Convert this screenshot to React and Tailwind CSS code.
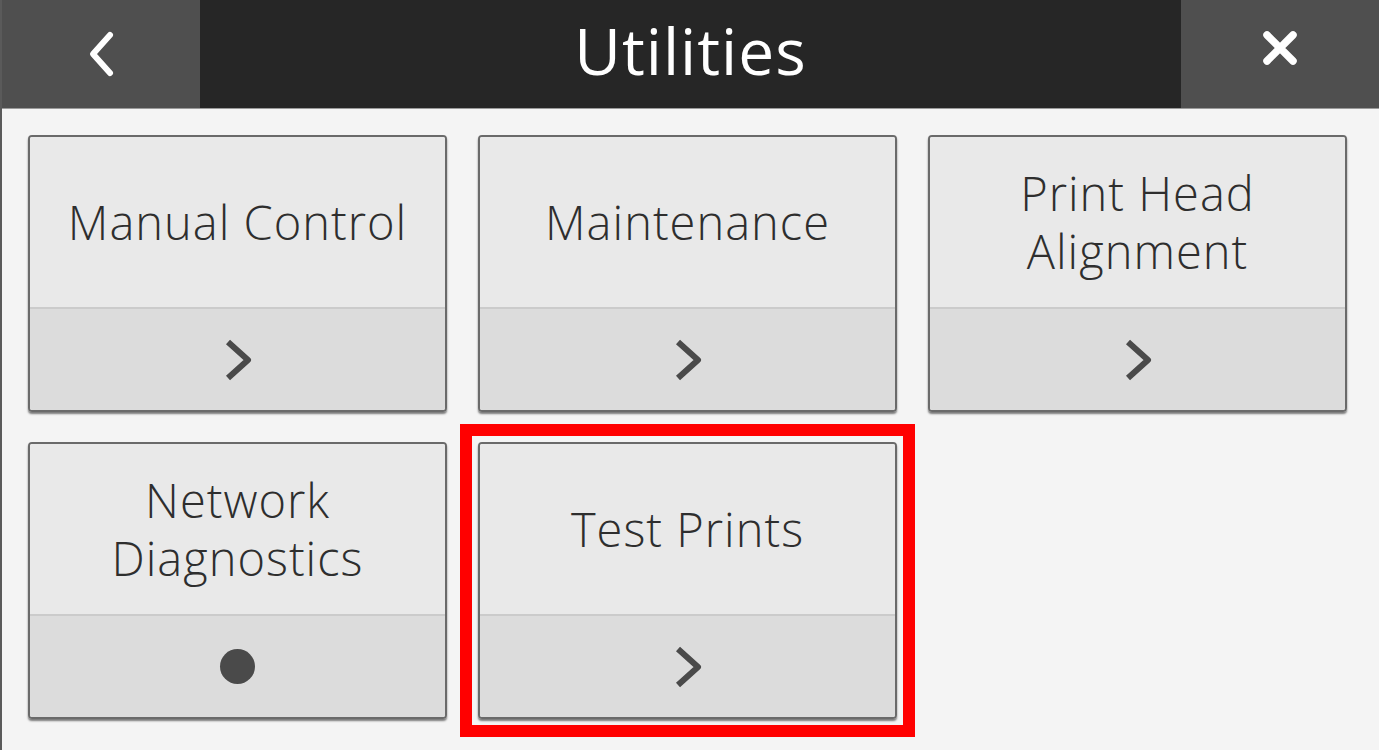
import React from "react";

const font = { fontFamily: '"Open Sans", "DejaVu Sans", sans-serif' };

function Chevron() {
  return (
    <svg width="34" height="46" viewBox="0 0 34 46" fill="none">
      <path d="M7 5 L27 23 L7 41" stroke="#4a4a4a" strokeWidth="6" strokeLinejoin="round" strokeLinecap="butt" />
    </svg>
  );
}

function Dot() {
  return <div className="w-[35px] h-[35px] rounded-full bg-[#4a4a4a]" />;
}

function Card({ lines, icon }) {
  return (
    <div className="w-[419px] h-[277px] flex flex-col rounded-[4px] border-2 border-[#6a6a6a] overflow-hidden shadow-[0_2px_2px_rgba(0,0,0,0.5)]">
      <div className="h-[172px] bg-[#e9e9e9] flex flex-col items-center justify-center text-[47px] leading-[58px] tracking-[1px] font-light text-[#2e2e2e] border-b-2 border-[#cbcbcb]">
        {lines.map((l) => (
          <div key={l}>{l}</div>
        ))}
      </div>
      <div className="flex-1 bg-[#dcdcdc] flex items-center justify-center">
        {icon === "dot" ? <Dot /> : <Chevron />}
      </div>
    </div>
  );
}

export default function App() {
  return (
    <div className="w-[1379px] h-[750px] bg-[#f4f4f4] flex flex-col border-l-2 border-[#5a5a5a] overflow-hidden" style={font}>
      <div className="h-[109px] flex shrink-0 border-b border-[#9a9a9a]">
        <div className="w-[198px] bg-[#4f4f4f] flex items-center justify-center">
          <svg width="40" height="50" viewBox="0 0 40 50" fill="none">
            <path d="M29 6 L12 25 L29 44" stroke="#ffffff" strokeWidth="6" strokeLinecap="round" strokeLinejoin="round" />
          </svg>
        </div>
        <div className="flex-1 bg-[#262626] flex items-center justify-center text-white text-[64px] tracking-[1px] leading-none pb-[6px]">
          Utilities
        </div>
        <div className="w-[198px] bg-[#4f4f4f] flex items-center justify-center pb-[12px]">
          <svg width="40" height="40" viewBox="0 0 40 40" fill="none">
            <path d="M7 7 L33 33 M33 7 L7 33" stroke="#ffffff" strokeWidth="7.5" strokeLinecap="round" />
          </svg>
        </div>
      </div>
      <div className="pt-[26px] pl-[26px] grid grid-cols-[419px_419px_419px] gap-x-[31px] gap-y-[30px]">
        <Card lines={["Manual Control"]} />
        <Card lines={["Maintenance"]} />
        <Card lines={["Print Head", "Alignment"]} />
        <Card lines={["Network", "Diagnostics"]} icon="dot" />
        <div className="relative">
          <Card lines={["Test Prints"]} />
          <div className="absolute -left-[18px] -right-[18px] -top-[18px] -bottom-[18px] border-[12px] border-[#ff0000]" />
        </div>
      </div>
    </div>
  );
}
